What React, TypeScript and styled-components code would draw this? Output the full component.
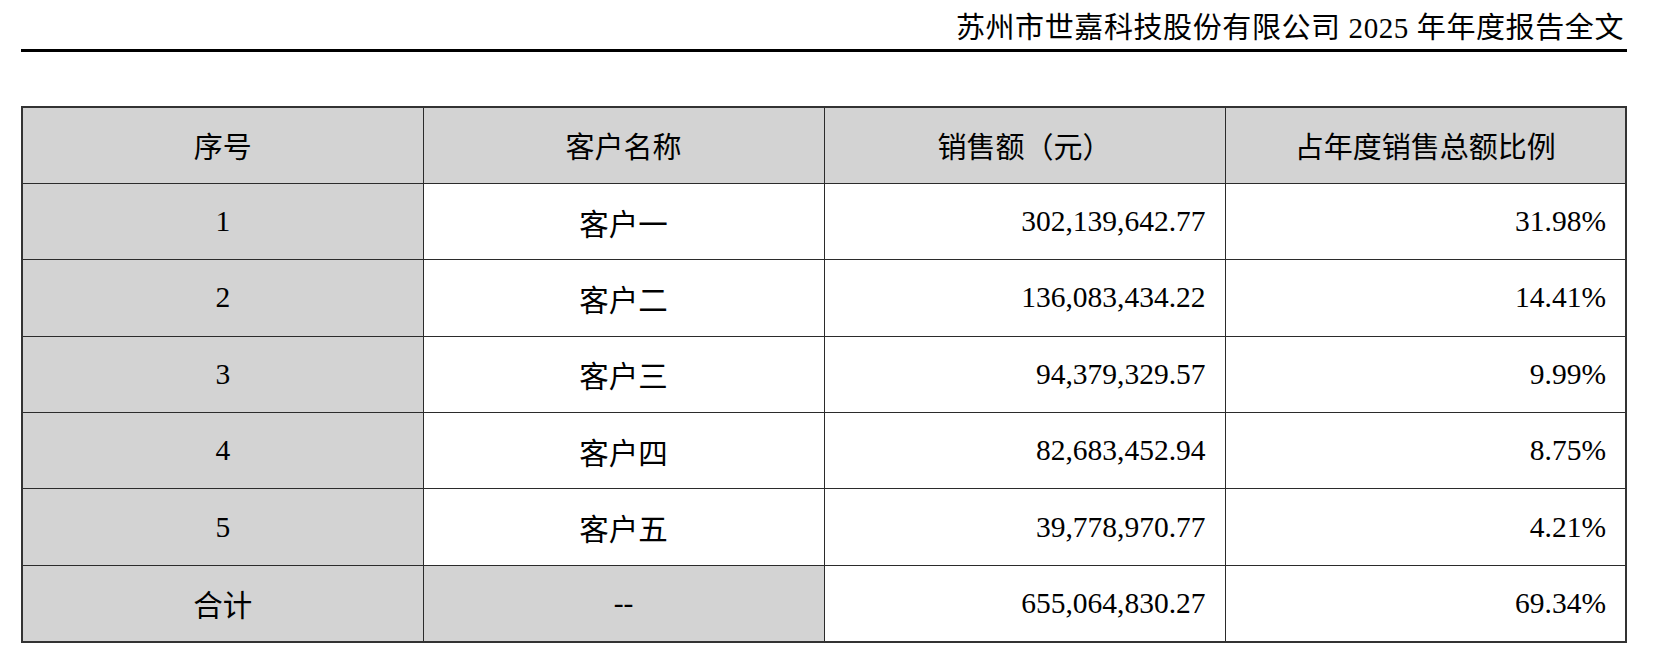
import React from "react";
import styled, { createGlobalStyle } from "styled-components";

const GlobalStyle = createGlobalStyle`
  body {
    margin: 0;
    background: #fff;
    font-family: "Liberation Serif", "Noto Sans CJK SC", serif;
    color: #000;
  }
`;

const Page = styled.div`
  width: 1606px;
  padding-left: 21px;
`;

const ReportHeader = styled.div`
  padding-top: 14px;
  padding-right: 3px;
  text-align: right;
  font-size: 29px;
  line-height: 29px;
  letter-spacing: 0.6px;
  margin-bottom: 6px;
`;

const HeaderRule = styled.div`
  height: 3px;
  background: #000;
`;

const Table = styled.table`
  margin-top: 54px;
  width: 1606px;
  table-layout: fixed;
  border-collapse: collapse;
  border: 2px solid #333;
  font-size: 29.5px;
`;

const Row = styled.tr`
  height: 76.4px;
`;

const Cell = styled.td<{ $shaded?: boolean; $align?: "center" | "right" }>`
  border: 1px solid #2b2b2b;
  padding: 0 ${(p) => (p.$align === "right" ? "19px" : "0")} 0 0;
  background: ${(p) => (p.$shaded ? "#d3d3d3" : "#fff")};
  text-align: ${(p) => p.$align ?? "center"};
  vertical-align: middle;
  white-space: nowrap;
`;

const HeadCell = styled(Cell).attrs({ as: "th" })`
  font-weight: normal;
  font-size: 29px;
`;

const customers = [
  { no: "1", name: "客户一", amount: "302,139,642.77", share: "31.98%" },
  { no: "2", name: "客户二", amount: "136,083,434.22", share: "14.41%" },
  { no: "3", name: "客户三", amount: "94,379,329.57", share: "9.99%" },
  { no: "4", name: "客户四", amount: "82,683,452.94", share: "8.75%" },
  { no: "5", name: "客户五", amount: "39,778,970.77", share: "4.21%" },
];

export default function App(): JSX.Element {
  return (
    <>
      <GlobalStyle />
      <Page>
        <ReportHeader>苏州市世嘉科技股份有限公司 2025 年年度报告全文</ReportHeader>
        <HeaderRule />
        <Table>
          <thead>
            <Row>
              <HeadCell $shaded>序号</HeadCell>
              <HeadCell $shaded>客户名称</HeadCell>
              <HeadCell $shaded>销售额（元）</HeadCell>
              <HeadCell $shaded>占年度销售总额比例</HeadCell>
            </Row>
          </thead>
          <tbody>
            {customers.map((c) => (
              <Row key={c.no}>
                <Cell $shaded>{c.no}</Cell>
                <Cell>{c.name}</Cell>
                <Cell $align="right">{c.amount}</Cell>
                <Cell $align="right">{c.share}</Cell>
              </Row>
            ))}
            <Row>
              <Cell $shaded>合计</Cell>
              <Cell $shaded>--</Cell>
              <Cell $align="right">655,064,830.27</Cell>
              <Cell $align="right">69.34%</Cell>
            </Row>
          </tbody>
        </Table>
      </Page>
    </>
  );
}
